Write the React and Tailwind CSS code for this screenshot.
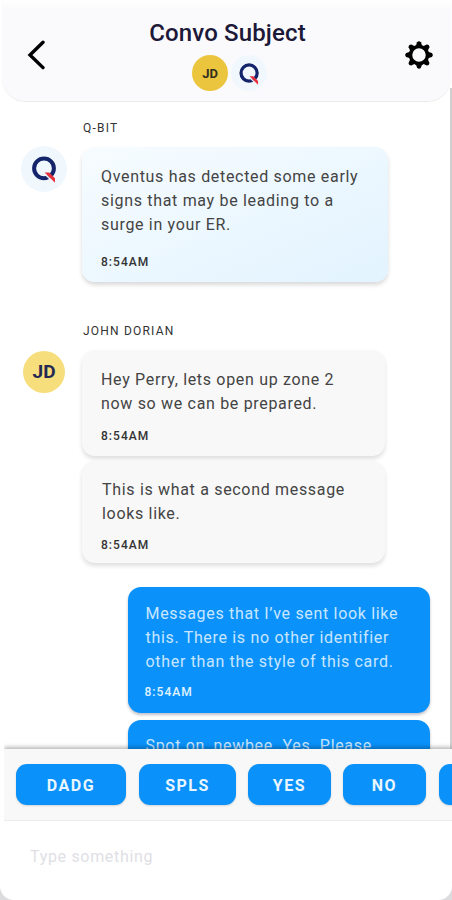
const QLogo = ({ className }) => (
  <svg viewBox="0 0 25 27" className={className} fill="none">
    <circle cx="12" cy="12.3" r="9.9" stroke="#14246b" strokeWidth="4" />
    <path d="M11.2 16.4L22.4 27" stroke="#f0f8fe" strokeWidth="1.6" />
    <path d="M12.6 16.4h4.6L23 22.2V26.8z" fill="#e8303c" />
  </svg>
);

const Gear = () => (
  <svg viewBox="-14 -14 28 28" className="h-7 w-7">
    <circle r="8.5" fill="none" stroke="#000" strokeWidth="3.5" />
    {[0, 45, 90, 135, 180, 225, 270, 315].map((a) => (
      <path key={a} transform={`rotate(${a})`} d="M-3.2 -9L-1.9 -12.8Q0 -14.8 1.9 -12.8L3.2 -9Z" fill="#000" />
    ))}
  </svg>
);

const Bubble = ({ lines, className, time, timeClass }) => (
  <div className={`rounded-[13px] ${className}`}>
    <div className="text-[16px] leading-6 tracking-[0.68px] whitespace-nowrap">
      {lines.map((l) => (
        <div key={l}>{l}</div>
      ))}
    </div>
    {time && <div className={`text-[12px] leading-4 font-medium tracking-[1.05px] ${timeClass}`}>{time}</div>}
  </div>
);

const grayCard = "w-[303px] bg-[#f8f8f8] text-[#444] shadow-[0_3px_4px_rgba(0,0,0,0.13)]";
const blueCard = "w-[302px] shrink-0 bg-[#0a92fa] text-[#c8e6ff] shadow-[0_2px_3px_rgba(0,0,40,0.25)]";
const quick = "flex h-[41px] shrink-0 items-center justify-center rounded-[11px] bg-[#0a92fa] pt-[2px] text-[16px] font-bold tracking-[1.5px] text-[#eaf6ff] shadow-[0_1px_2px_rgba(0,0,0,0.15)]";

export default function App() {
  return (
    <div className="flex h-[900px] w-[452px] flex-col overflow-hidden bg-white font-['Roboto',sans-serif]">
      <header className="relative ml-[2px] flex h-[101px] w-[449px] shrink-0 items-center justify-between rounded-b-[24px] bg-linear-to-b from-white to-[#fafafc] to-10% pr-[18px] pl-[25px] shadow-[0_1px_1px_rgba(0,0,0,0.09)]">
        <svg viewBox="0 0 18 30" className="mt-[8px] h-[30px] w-[18px]" fill="none" stroke="#000" strokeWidth="3.4" strokeLinecap="round">
          <path d="M16 2.2L3 15L16 27.6" />
        </svg>
        <div className="ml-[5px] flex h-full flex-col items-center pt-[19px]">
          <h1 className="text-[24px] leading-[28px] font-medium tracking-[0.15px] whitespace-nowrap text-[#1c1838]">Convo Subject</h1>
          <div className="mt-[8px] ml-[4px] flex gap-[3px]">
            <div className="flex h-9 w-9 items-center justify-center rounded-full bg-[#ecc53e] pt-px text-[13px] font-bold text-[#33301f]">JD</div>
            <div className="flex h-9 w-9 items-center justify-center rounded-full bg-[#f0f8fe]">
              <QLogo className="mt-[2px] h-[22px] w-[21px]" />
            </div>
          </div>
        </div>
        <div className="mt-[9px]"><Gear /></div>
      </header>

      <main className="flex h-[648px] shrink-0 flex-col overflow-hidden">
        <div className="mt-[19px] pl-[83px] text-[12px] leading-4 tracking-[1.2px] text-[#333]">Q-BIT</div>
        <div className="mt-[11px] flex pl-[21px]">
          <div className="mt-[-1px] mr-[15px] flex h-[46px] w-[46px] items-center justify-center rounded-full bg-[#f0f8fe]">
            <QLogo className="h-[27px] w-[25px]" />
          </div>
          <Bubble
            time="8:54AM"
            lines={["Qventus has detected some early", "signs that may be leading to a", "surge in your ER."]}
            className="h-[135px] w-[306px] bg-linear-to-br from-[#f7fcff] to-[#e2f3ff] pt-[18px] pl-[19px] text-[#444] shadow-[0_3px_4px_rgba(0,0,0,0.15)]"
            timeClass="mt-[17px] text-[#333]"
          />
        </div>

        <div className="mt-[41px] pl-[83px] text-[12px] leading-4 tracking-[1.2px] text-[#333]">JOHN DORIAN</div>
        <div className="mt-[11px] flex pl-[23px]">
          <div className="mt-[1px] mr-[17px] flex h-[42px] w-[42px] items-center justify-center rounded-full bg-[#f7de7c] text-[19px] font-bold text-[#242852]">JD</div>
          <div className="flex flex-col gap-[5px]">
            <Bubble
              time="8:54AM"
              lines={["Hey Perry, lets open up zone 2", "now so we can be prepared."]}
              className={`h-[106px] pt-[18px] pl-[19px] ${grayCard}`}
              timeClass="mt-[12px] text-[#333]"
            />
            <Bubble
              time="8:54AM"
              lines={["This is what a second message", "looks like."]}
              className={`h-[102px] pt-[17px] pl-[20px] ${grayCard}`}
              timeClass="-ml-px mt-[11px] text-[#333]"
            />
          </div>
        </div>

        <div className="mt-[24px] flex flex-col gap-[7px] pl-[128px]">
          <Bubble
            time="8:54AM"
            lines={["Messages that I’ve sent look like", "this. There is no other identifier", "other than the style of this card."]}
            className={`h-[126px] pt-[15px] pl-[17.5px] ${blueCard}`}
            timeClass="-ml-px mt-[10px] text-[#e0f2ff]"
          />
          <Bubble
            lines={["Spot on, newbee. Yes. Please"]}
            className={`h-[60px] pt-[14px] pl-[17.5px] ${blueCard}`}
          />
        </div>
        <div className="absolute top-[88px] left-[450px] h-[661px] w-[2px] bg-[#cfcfcf]" />
      </main>

      <div className="relative ml-[4px] flex h-[72px] w-[448px] shrink-0 gap-[13px] border-b border-[#ececf0] bg-[#f8f8f8] pt-[15px] pl-[12px] shadow-[0_-2px_4px_rgba(0,0,0,0.28)] [clip-path:inset(-10px_0_0_0)]">
        <div className={`w-[110px] ${quick}`}>DADG</div>
        <div className={`w-[97px] ${quick}`}>SPLS</div>
        <div className={`-ml-px w-[83px] ${quick}`}>YES</div>
        <div className={`-ml-px w-[83px] ${quick}`}>NO</div>
        <div className={`w-[83px] ${quick}`} />
      </div>

      <footer className="flex-1 bg-[#dcdcde]">
        <div className="flex h-full items-center rounded-b-[14px] bg-white pb-[8px] pl-[30px]">
          <input
            placeholder="Type something"
            className="w-full bg-transparent text-[16px] tracking-[0.68px] outline-none placeholder:text-[#dfe0e6]"
          />
        </div>
      </footer>
    </div>
  );
}
